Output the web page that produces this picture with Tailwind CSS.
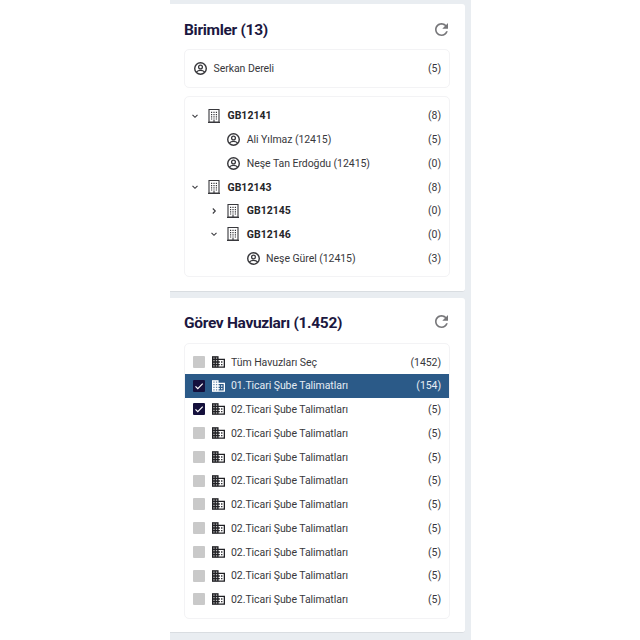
<!DOCTYPE html>
<html lang="tr">
<head>
<meta charset="utf-8">
<title>Birimler</title>
<script src="https://cdn.jsdelivr.net/npm/@tailwindcss/browser@4"></script>
</head>
<body class="h-[640px] overflow-hidden bg-white font-[Roboto,sans-serif] text-[10.500px] tracking-[-0.060px] text-[#38383c]">
<svg class="hidden">
  <symbol id="user" viewBox="2 2 20 20"><circle cx="12" cy="12" r="8.900" fill="none" stroke="currentColor" stroke-width="2.200"/><circle cx="12" cy="9.600" r="2.900" fill="none" stroke="currentColor" stroke-width="2"/><path d="M5.600 17.600C7.200 15.900 9.400 15 12 15s4.800.9 6.400 2.600" fill="none" stroke="currentColor" stroke-width="2"/></symbol>
  <symbol id="building" viewBox="0 0 12 14"><path d="M1 .5h10v12.500H1zM0 13.400h12M6 13v-2" fill="none" stroke="currentColor" stroke-width="1.100"/><path d="M3 2.800h1.200v1.200H3zM5.400 2.800h1.200v1.200H5.400zM7.800 2.800H9v1.200H7.800zM3 5h1.200v1.200H3zM5.400 5h1.200v1.200H5.400zM7.800 5H9v1.200H7.800zM3 7.200h1.200v1.200H3zM5.400 7.200h1.200v1.200H5.400zM7.800 7.200H9v1.200H7.800zM3 9.400h1.200v1.200H3zM5.400 9.400h1.200v1.200H5.400zM7.800 9.400H9v1.200H7.800z" fill="currentColor"/></symbol>
  <symbol id="business" viewBox="2 3 20 18"><path fill="currentColor" fill-opacity=".3" d="M2 3h10v18H2z"/><path fill="currentColor" d="M12 7V3H2v18h20V7H12zM6 19H4v-2h2v2zm0-4H4v-2h2v2zm0-4H4V9h2v2zm0-4H4V5h2v2zm4 12H8v-2h2v2zm0-4H8v-2h2v2zm0-4H8V9h2v2zm0-4H8V5h2v2zm10 12h-8v-2h2v-2h-2v-2h2v-2h-2V9h8v10zm-2-8h-2v2h2v-2zm0 4h-2v2h2v-2z"/></symbol>
  <symbol id="refresh" viewBox="4 4 16 16"><path fill="currentColor" d="M17.650 6.350C16.200 4.900 14.210 4 12 4c-4.420 0-7.990 3.580-7.990 8s3.570 8 7.990 8c3.730 0 6.840-2.550 7.730-6h-2.080c-.82 2.330-3.040 4-5.650 4-3.310 0-6-2.690-6-6s2.690-6 6-6c1.660 0 3.140.69 4.220 1.780L13 11h7V4l-2.350 2.350z"/></symbol>
  <symbol id="down" viewBox="0 0 8 8"><path d="M1.500 2.800 4 5.300l2.500-2.500" fill="none" stroke="currentColor" stroke-width="1.100"/></symbol>
  <symbol id="right" viewBox="0 0 8 8"><path d="M2.800 1.500 5.300 4 2.800 6.500" fill="none" stroke="currentColor" stroke-width="1.100"/></symbol>
</svg>
<main class="ml-[170px] flex h-[640px] w-[301px] flex-col gap-[6px] bg-[#e9edf1] pt-1 pr-[6px]">
  <section class="h-[288px] rounded-r-[3px] border-b border-[#d9dde1] bg-white pr-[15px] pl-[14px]">
    <header class="flex h-[45px] items-center justify-between pt-[6px] pr-[2px]">
      <h1 class="pt-[2px] text-[15.500px] font-bold tracking-[-0.300px] text-[#1b1740]">Birimler (13)</h1>
      <svg class="size-[13px] text-[#77777a]"><use href="#refresh"/></svg>
    </header>
    <div class="flex h-[39px] items-center rounded-[5px] border border-[#f3f3f5] pr-2 pl-[9px]">
      <svg class="mr-[6.500px] size-[13px]"><use href="#user"/></svg><span class="pt-px">Serkan Dereli</span><span class="ml-auto pt-px">(5)</span>
    </div>
    <div id="tree" class="mt-[8px] h-[181px] rounded-[5px] border border-[#f3f3f5] pt-[6.750px] pr-2 pl-[6px]"></div>
  </section>
  <section class="h-[335px] rounded-r-[3px] border-b border-[#d9dde1] bg-white pr-[15px] pl-[14px]">
    <header class="flex h-[45px] items-center justify-between pt-[6px] pr-[2px]">
      <h2 class="text-[15.500px] font-bold tracking-[-0.320px] text-[#1b1740]">Görev Havuzları (1.452)</h2>
      <svg class="mb-[4px] size-[13px] text-[#77777a]"><use href="#refresh"/></svg>
    </header>
    <div id="pools" class="h-[276px] rounded-[5px] border border-[#f3f3f5] pt-[6px]"></div>
  </section>
</main>
<script>
const tree = [
  [0, 'down', 'building', 'GB12141', 8],
  [1, '', 'user', 'Ali Yılmaz (12415)', 5],
  [1, '', 'user', 'Neşe Tan Erdoğdu (12415)', 0],
  [0, 'down', 'building', 'GB12143', 8],
  [1, 'right', 'building', 'GB12145', 0],
  [1, 'down', 'building', 'GB12146', 0],
  [2, '', 'user', 'Neşe Gürel (12415)', 3]
];
document.getElementById('tree').innerHTML = tree.map(([level, arrow, icon, name, count]) => `
  <div class="flex h-[23.750px] items-center">
    <svg class="size-2 shrink-0" style="margin-left:${level * 19.300}px">${arrow ? `<use href="#${arrow}"/>` : ''}</svg>
    <svg class="${icon === 'user' ? 'ml-[9px] h-[13px] w-[13px] shrink-0' : 'ml-[9px] mr-px h-[14px] w-[12px] shrink-0'}"><use href="#${icon}"/></svg>
    <span class="${icon === 'user' ? 'ml-[6.500px] pt-px' : 'ml-[6.500px] pt-px font-bold tracking-normal text-[#252529]'}">${name}</span>
    <span class="ml-auto pt-px">(${count})</span>
  </div>`).join('');
const pools = [['Tüm Havuzları Seç', 1452, false], ['01.Ticari Şube Talimatları', 154, true], ['02.Ticari Şube Talimatları', 5, true],
  ...Array.from({length: 8}, () => ['02.Ticari Şube Talimatları', 5, false])];
document.getElementById('pools').innerHTML = pools.map(([name, count, on], i) => `
  <div class="${i === 1 ? 'flex h-[23.750px] items-center bg-[#2b5a88] pr-2 pl-2 text-[#e6edf4]' : 'flex h-[23.750px] items-center pr-2 pl-2'}">
    <span class="${on ? 'size-3 rounded-[1px] bg-[#15103c]' : 'size-3 rounded-[1px] bg-[#c9c9c9]'}">${on ? '<svg viewBox="0 0 12 12" class="size-3"><path d="M2.500 6.300 4.800 8.600 9.700 3.600" fill="none" stroke="white" stroke-width="1.200"/></svg>' : ''}</span>
    <svg class="${i === 1 ? 'ml-[6.500px] h-[12px] w-[13px] text-white' : 'ml-[6.500px] h-[12px] w-[13px] text-[#202024]'}"><use href="#business"/></svg>
    <span class="ml-[6.500px] pt-px">${name}</span>
    <span class="ml-auto pt-px">(${count})</span>
  </div>`).join('');
</script>
</body>
</html>
